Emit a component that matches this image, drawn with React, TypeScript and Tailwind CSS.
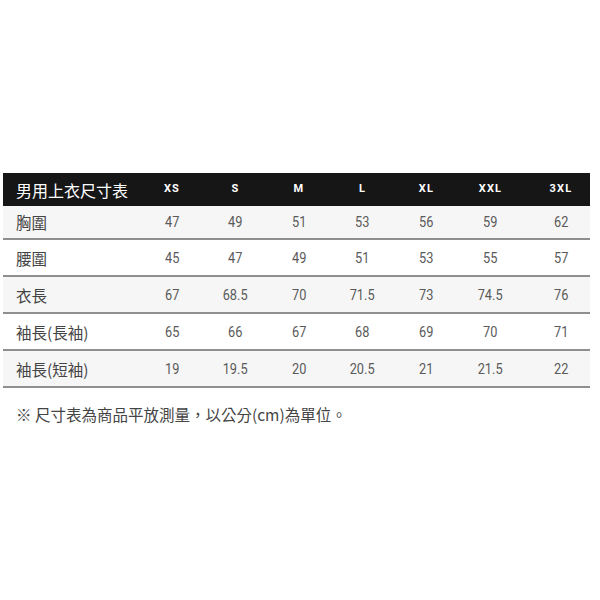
const sizes = ['XS', 'S', 'M', 'L', 'XL', 'XXL', '3XL'];

const rows: { label: string; values: string[] }[] = [
  { label: '胸圍', values: ['47', '49', '51', '53', '56', '59', '62'] },
  { label: '腰圍', values: ['45', '47', '49', '51', '53', '55', '57'] },
  { label: '衣長', values: ['67', '68.5', '70', '71.5', '73', '74.5', '76'] },
  { label: '袖長(長袖)', values: ['65', '66', '67', '68', '69', '70', '71'] },
  { label: '袖長(短袖)', values: ['19', '19.5', '20', '20.5', '21', '21.5', '22'] },
];

const cols = 'grid grid-cols-[137px_64px_63px_64px_63px_65px_63px_68px]';
const cjk = { fontFamily: '"Noto Sans CJK TC", "Noto Sans", sans-serif' };

export default function App() {
  return (
    <div className="w-[600px] h-[600px] bg-white pt-[173px] pl-[3px]">
      <div className="w-[587px]">
        {/* Header */}
        <div className={`${cols} h-[33px] items-center bg-[#161616] text-white`}>
          <div className="pl-[13px] text-[16px] leading-none" style={cjk}>
            男用上衣尺寸表
          </div>
          {sizes.map((s, i) => (
            <div
              key={s}
              className={`text-center text-[11px] font-bold tracking-[1.2px] font-['Roboto',sans-serif] ${
                i === sizes.length - 1 ? 'pl-[10px]' : ''
              }`}
            >
              {s}
            </div>
          ))}
        </div>

        {/* Body */}
        {rows.map((r, ri) => (
          <div
            key={r.label}
            className={`${cols} items-center border-b-2 border-[#8f8f8f] ${
              ri === 0 ? 'h-[34px]' : 'h-[37px]'
            } ${ri % 2 === 0 ? 'bg-[#f6f6f6]' : 'bg-white'}`}
          >
            <div className="pl-[13px] pt-[2px] text-[15.5px] text-[#444]" style={cjk}>
              {r.label}
            </div>
            {r.values.map((v, i) => (
              <div
                key={i}
                className={`text-center pt-[2px] text-[14.5px] text-[#5a5a5a] font-['Roboto',sans-serif] ${
                  i === r.values.length - 1 ? 'pl-[10px]' : ''
                }`}
              >
                <span className="inline-block scale-x-[0.88]">{v}</span>
              </div>
            ))}
          </div>
        ))}
      </div>

      {/* Footnote */}
      <p className="mt-[16px] pl-[13px] text-[15.5px] leading-[20px] text-[#444]" style={cjk}>
        ※ 尺寸表為商品平放測量，以公分(cm)為單位。
      </p>
    </div>
  );
}
